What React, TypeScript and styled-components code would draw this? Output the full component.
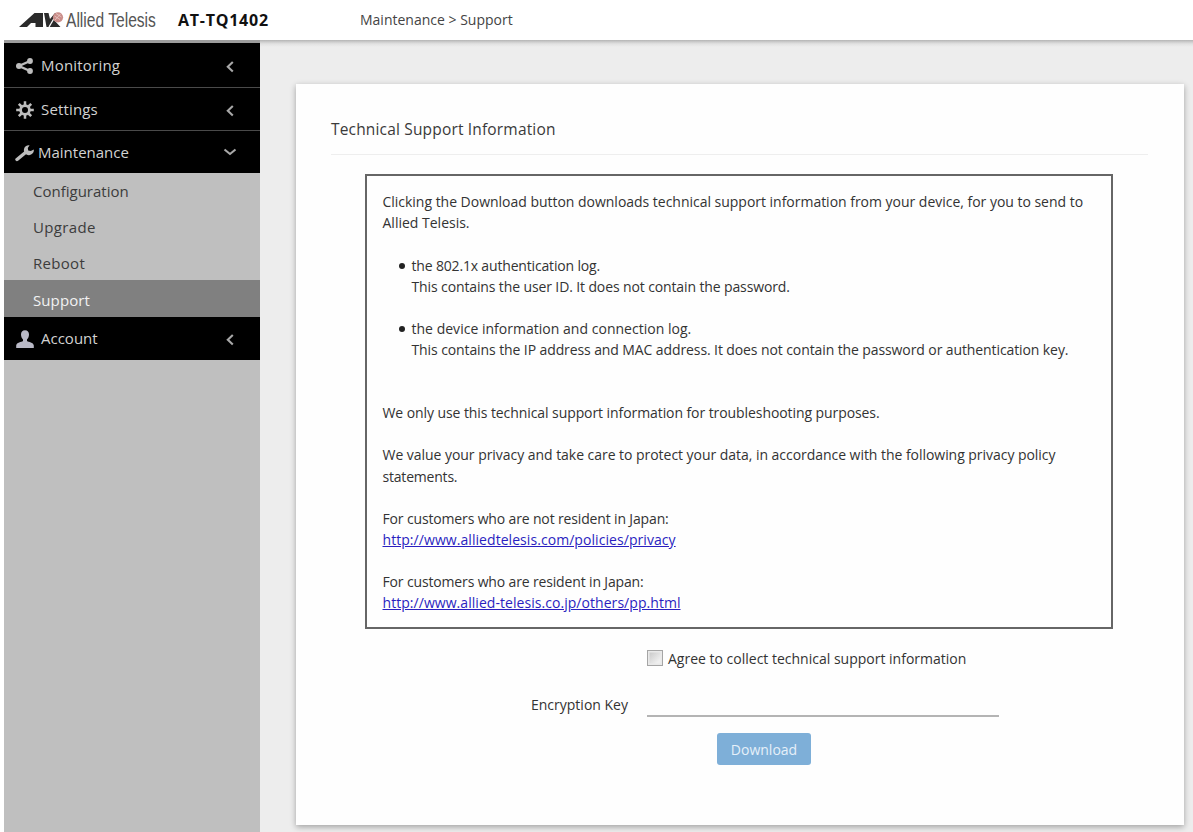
import React from 'react';
import styled, { createGlobalStyle, css } from 'styled-components';

const GlobalStyle = createGlobalStyle`
  *, *::before, *::after { box-sizing: border-box; }
  body { margin: 0; background: #fff; overflow: hidden; font-family: "Open Sans", "Noto Sans", sans-serif; font-size: 14px; color: #333; }
`;

const Page = styled.div`
  display: flex;
  flex-direction: column;
  width: 1193px;
  height: 832px;
  overflow: hidden;
  padding-left: 4px;
`;

const Header = styled.header`
  flex: none;
  display: flex;
  align-items: center;
  height: 40px;
  background: #fff;
`;

const Brand = styled.div`
  flex: none;
  display: flex;
  align-items: center;
  width: 157px;
  padding-left: 14px;
  svg { flex: none; }
`;

const BrandName = styled.span`
  flex: none;
  margin-left: 2px;
  font-family: "Liberation Sans", Arial, sans-serif;
  font-size: 19.5px;
  line-height: 26px;
  white-space: nowrap;
  transform: scaleX(0.8);
  transform-origin: left;
  color: #555;
`;

const Model = styled.strong`
  margin-left: 17px;
  width: 182px;
  font-size: 16px;
  font-weight: 700;
  letter-spacing: 0.75px;
  line-height: 20px;
  color: #111;
`;

const Text = styled.span<{ $s?: number }>`
  letter-spacing: ${p => p.$s ?? 0}px;
  white-space: nowrap;
`;

const Crumbs = styled.nav`
  line-height: 20px;
  color: #444;
`;

const Body = styled.div`
  flex: 1;
  display: flex;
  min-height: 0;
`;

const Sidebar = styled.aside`
  flex: none;
  display: flex;
  flex-direction: column;
  width: 256px;
  background: #bfbfbf;
  border-top: 3px solid #9c9c9c;
`;

const Section = styled.div<{ $h: number; $line?: boolean }>`
  display: flex;
  align-items: center;
  height: ${p => p.$h}px;
  padding: 1px 23px 0 11px;
  background: #000;
  color: #d2d2d2;
  font-size: 15px;
  ${p => p.$line && css`border-bottom: 1px solid #4a4a4a;`}
  svg { flex: none; display: block; }
`;

const SectionLabel = styled.span<{ $x?: number; $s?: number }>`
  flex: 1;
  margin-left: ${p => p.$x ?? 7}px;
  padding-bottom: 2px;
  letter-spacing: ${p => p.$s ?? 0}px;
`;

const SubItem = styled.div<{ $h: number; $active?: boolean; $s?: number }>`
  display: flex;
  align-items: center;
  height: ${p => p.$h}px;
  padding: ${p => (p.$active ? 2 : 0)}px 0 0 29px;
  font-size: 15px;
  letter-spacing: ${p => p.$s ?? 0}px;
  color: ${p => (p.$active ? '#f2f2f2' : '#3c3c3c')};
  background: ${p => (p.$active ? '#808080' : 'transparent')};
`;

const Main = styled.main`
  flex: 1;
  padding: 44px 9px 0 36px;
  background: linear-gradient(#b4b4b4, #cdcdcd 2px, #e2e2e2 4px, #ededed 7px);
`;

const Card = styled.section`
  height: 741px;
  padding: 34px 36px 0 35px;
  background: #fefefe;
  box-shadow: 0 2px 6px rgba(0, 0, 0, 0.32);
`;

const CardTitle = styled.h1`
  height: 37px;
  margin: 0;
  font-size: 15.5px;
  font-weight: 400;
  line-height: 22px;
  color: #3a3a3a;
  border-bottom: 1px solid #eee;
`;

const Notice = styled.div`
  width: 748px;
  height: 455px;
  margin: 19px 0 0 34px;
  padding: 15.3px 0 0 15.5px;
  border: 2px solid #666;
  line-height: 21.1px;
  color: #333;
`;

const Para = styled.p<{ $after?: number }>`
  display: flex;
  flex-direction: column;
  align-items: flex-start;
  margin: 0 0 ${p => (p.$after ?? 1) * 21.1}px;
`;

const Bullets = styled.ul`
  list-style: none;
  margin: 0;
  padding: 0 0 0 29px;
`;

const Bullet = styled.li<{ $after: number }>`
  display: flex;
  flex-direction: column;
  align-items: flex-start;
  position: relative;
  margin-bottom: ${p => p.$after * 21.1}px;
  &::before {
    content: '';
    position: absolute;
    left: -13px;
    top: 8px;
    width: 6px;
    height: 6px;
    border-radius: 50%;
    background: #222;
  }
`;

const Link = styled.a<{ $s?: number }>`
  letter-spacing: ${p => p.$s ?? 0}px;
  color: #2a1fc0;
  text-decoration: underline;
`;

const Agree = styled.label`
  display: flex;
  align-items: center;
  height: 22px;
  margin: 18px 0 0 316px;
`;

const Check = styled.span`
  width: 16px;
  height: 16px;
  margin-right: 5px;
  border: 1px solid #a5a5a5;
  background: linear-gradient(135deg, #c4c4c4, #efefef 75%);
  box-shadow: inset 0 0 0 1.5px #e9e9e9;
`;

const Field = styled.div`
  display: flex;
  height: 31px;
  margin: 17px 0 0 200px;
`;

const FieldLabel = styled.span`
  width: 116px;
  padding-top: 9px;
  line-height: 20px;
`;

const Input = styled.div`
  width: 352px;
  border-bottom: 2px solid #b4b4b4;
`;

const Button = styled.button`
  display: block;
  width: 94px;
  height: 32px;
  margin: 16px 0 0 386px;
  padding: 0;
  border: 0;
  border-radius: 3px;
  background: #7eafd8;
  color: #e6f0f9;
  font: inherit;
`;

const LogoMark = () => (
  <svg width="46" height="26" viewBox="0 0 46 26">
    <path d="M1 20 L16.5 6 H25 V20 H17.5 V16 H13 L9 20 Z" fill="#2b2b2b" />
    <path d="M26 6 H30.5 L32 12 L37 6 H39 L36 13 L42.5 20 H28.5 Z" fill="#2b2b2b" />
    <path d="M31 20 L38 8" stroke="#fff" strokeWidth="1.3" />
    <circle cx="40" cy="10.3" r="5.1" fill="#c98c88" />
    <path d="M36.5 9 L42 12.5 M38 6.5 L43.5 10 M37 13 L42.5 7" stroke="#edd0cc" strokeWidth=".7" />
  </svg>
);

const ShareIcon = () => (
  <svg width="19" height="18" viewBox="0 0 19 18" fill="#bdbdbd" stroke="#bdbdbd">
    <path d="M15 4 L4 9 L15 14" fill="none" strokeWidth="2.4" />
    <circle cx="15" cy="4" r="2.9" stroke="none" />
    <circle cx="4" cy="9" r="3" stroke="none" />
    <circle cx="15" cy="14" r="2.9" stroke="none" />
  </svg>
);

const GearIcon = () => (
  <svg width="19" height="18" viewBox="0 0 19 18" fill="none" stroke="#bdbdbd">
    <circle cx="10" cy="9" r="4.4" strokeWidth="2.8" />
    <path d="M10 .2V4 M10 14V17.8 M1.2 9H5 M15 9H18.8 M3.8 2.8L6.5 5.5 M13.5 12.5L16.2 15.2 M3.8 15.2L6.5 12.5 M13.5 5.5L16.2 2.8" strokeWidth="2.5" />
  </svg>
);

const WrenchIcon = () => (
  <svg width="19" height="18" viewBox="0 0 19 18">
    <path d="M2 15.5 L10.5 8.5" stroke="#bdbdbd" strokeWidth="3.4" strokeLinecap="round" />
    <path d="M14.6 1.2 A5 5 0 1 0 18.8 5.4 L15.8 7 L13.2 6.4 L12.8 4 Z" fill="#bdbdbd" />
  </svg>
);

const UserIcon = () => (
  <svg width="19" height="18" viewBox="0 0 19 18" fill="#b9b9c6">
    <path d="M10 .2 C7.3 .2 6 2 6 4.6 C6 6.8 6.9 8.6 8 9.5 V11 C6.5 12.2 1.5 12.2 1.2 15.5 V18 H18.8 V15.5 C18.5 12.2 13.5 12.2 12 11 V9.5 C13.1 8.6 14 6.8 14 4.6 C14 2 12.7 .2 10 .2 Z" />
  </svg>
);

const Chevron = ({ down }: { down?: boolean }) => (
  <svg width="14" height="14" viewBox="0 0 14 14" fill="none" stroke="#a8a8a8" strokeWidth="2.1">
    <path d={down ? 'M1.5 3.5 L7 8 L12.5 3.5' : 'M9.8 3 L4.8 7.8 L9.8 12.6'} />
  </svg>
);

export default function App() {
  return (
    <>
      <GlobalStyle />
      <Page>
        <Header>
          <Brand><LogoMark /><BrandName>Allied Telesis</BrandName></Brand>
          <Model>AT-TQ1402</Model>
          <Crumbs><Text>Maintenance &gt; Support</Text></Crumbs>
        </Header>
        <Body>
          <Sidebar>
            <Section $h={45} $line><ShareIcon /><SectionLabel $s={0.2}>Monitoring</SectionLabel><Chevron /></Section>
            <Section $h={43} $line><GearIcon /><SectionLabel $s={0.15}>Settings</SectionLabel><Chevron /></Section>
            <Section $h={42}><WrenchIcon /><SectionLabel $x={4}>Maintenance</SectionLabel><Chevron down /></Section>
            <SubItem $h={36}>Configuration</SubItem>
            <SubItem $h={36} $s={0.35}>Upgrade</SubItem>
            <SubItem $h={35} $s={0.3}>Reboot</SubItem>
            <SubItem $h={37} $active $s={0.1}>Support</SubItem>
            <Section $h={43}><UserIcon /><SectionLabel>Account</SectionLabel><Chevron /></Section>
          </Sidebar>
          <Main>
            <Card>
              <CardTitle><Text $s={0.17}>Technical Support Information</Text></CardTitle>
              <Notice>
                <Para>
                  <Text $s={-0.02}>Clicking the Download button downloads technical support information from your device, for you to send to</Text>
                  <Text>Allied Telesis.</Text>
                </Para>
                <Bullets>
                  <Bullet $after={1}>
                    <Text $s={-0.17}>the 802.1x authentication log.</Text>
                    <Text $s={-0.12}>This contains the user ID. It does not contain the password.</Text>
                  </Bullet>
                  <Bullet $after={2}>
                    <Text $s={0.02}>the device information and connection log.</Text>
                    <Text $s={-0.1}>This contains the IP address and MAC address. It does not contain the password or authentication key.</Text>
                  </Bullet>
                </Bullets>
                <Para><Text $s={-0.08}>We only use this technical support information for troubleshooting purposes.</Text></Para>
                <Para>
                  <Text $s={-0.04}>We value your privacy and take care to protect your data, in accordance with the following privacy policy</Text>
                  <Text $s={-0.2}>statements.</Text>
                </Para>
                <Para>
                  <Text $s={-0.15}>For customers who are not resident in Japan:</Text>
                  <Link $s={0.06}>http://www.alliedtelesis.com/policies/privacy</Link>
                </Para>
                <Para $after={0}>
                  <Text $s={-0.15}>For customers who are resident in Japan:</Text>
                  <Link $s={0.05}>http://www.allied-telesis.co.jp/others/pp.html</Link>
                </Para>
              </Notice>
              <Agree><Check /><Text>Agree to collect technical support information</Text></Agree>
              <Field><FieldLabel>Encryption Key</FieldLabel><Input /></Field>
              <Button>Download</Button>
            </Card>
          </Main>
        </Body>
      </Page>
    </>
  );
}
